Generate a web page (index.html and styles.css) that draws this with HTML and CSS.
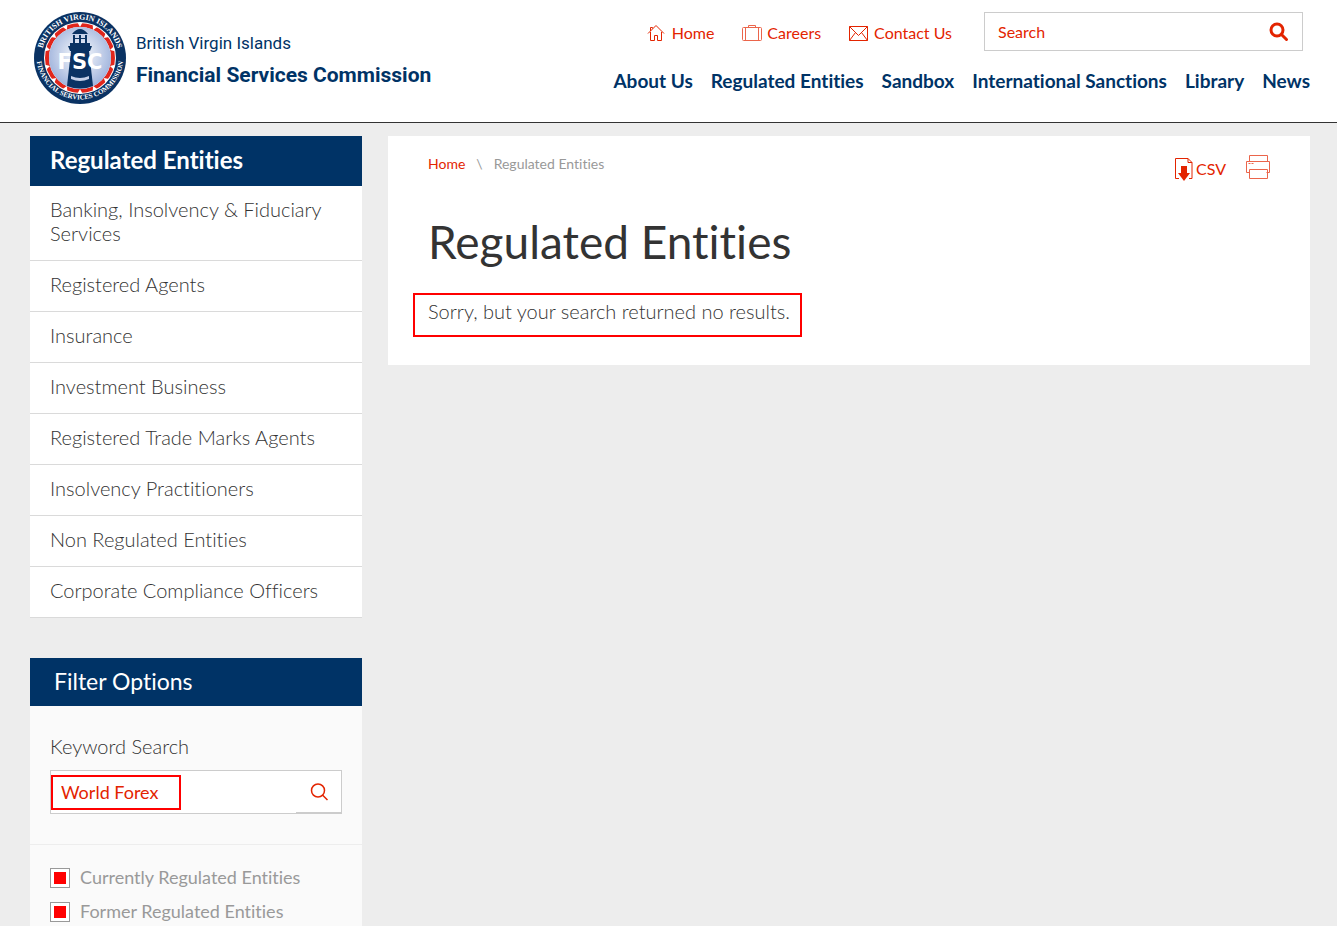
FILE: index.html
```html
<!DOCTYPE html>
<html lang="en">
<head>
    <meta charset="UTF-8">
    <meta name="viewport" content="width=device-width, initial-scale=1.0">
    <title>Regulated Entities | British Virgin Islands Financial Services Commission</title>
    <link rel="stylesheet" href="styles.css">
</head>
<body>
    <header class="header">
        <a class="logo" href="#">
            <svg class="logo-seal" viewBox="0 0 92 92" aria-hidden="true">
                <defs>
                    <radialGradient id="sky" cx="50%" cy="45%" r="55%">
                        <stop offset="0" stop-color="#ffffff"/>
                        <stop offset="1" stop-color="#9fb3dc"/>
                    </radialGradient>
                    <path id="arcTop" d="M7.500 46A38.500 38.500 0 0 1 84.500 46"/>
                    <path id="arcBottom" d="M2.500 44A43.500 43.500 0 0 0 89.500 44"/>
                </defs>
                <circle cx="46" cy="46" r="46" fill="#0a3263"/>
                <circle cx="46" cy="46" r="36" fill="#fff"/>
                <circle cx="46" cy="46" r="33" fill="none" stroke="#e1261c" stroke-width="4"/>
                <circle cx="46" cy="46" r="31" fill="url(#sky)"/>
                <g fill="#fff">
                    <path id="notch" d="M43.500 10.500h5L46 15z"/>
                    <use href="#notch" transform="rotate(25 46 46)"/>
                    <use href="#notch" transform="rotate(50 46 46)"/>
                    <use href="#notch" transform="rotate(75 46 46)"/>
                    <use href="#notch" transform="rotate(105 46 46)"/>
                    <use href="#notch" transform="rotate(130 46 46)"/>
                    <use href="#notch" transform="rotate(155 46 46)"/>
                    <use href="#notch" transform="rotate(180 46 46)"/>
                    <use href="#notch" transform="rotate(205 46 46)"/>
                    <use href="#notch" transform="rotate(230 46 46)"/>
                    <use href="#notch" transform="rotate(255 46 46)"/>
                    <use href="#notch" transform="rotate(285 46 46)"/>
                    <use href="#notch" transform="rotate(310 46 46)"/>
                    <use href="#notch" transform="rotate(335 46 46)"/>
                </g>
                <!-- lighthouse -->
                <g fill="#0a3263">
                    <path d="M38 22q8-10 16 0zM39 23h2v8h-2zM51 23h2v8h-2zM45 23h2v8h-2z"/>
                    <path d="M39 26h14v1H39zM36 31h20v4H36zM34 34h24l-2 5H36z"/>
                    <path d="M37 39h18l4 35q-13 5-26 0z"/>
                </g>
                <path d="M37 64q9 4 18 0v3q-9 4-18 0z" fill="#c5d0e8"/>
                <text class="seal-name" x="46" y="57" text-anchor="middle">FSC</text>
                <text class="seal-ring"><textPath href="#arcTop" startOffset="50%" text-anchor="middle">BRITISH VIRGIN ISLANDS</textPath></text>
                <text class="seal-ring seal-ring-bottom"><textPath href="#arcBottom" startOffset="50%" text-anchor="middle">FINANCIAL SERVICES COMMISSION</textPath></text>
            </svg>
            <span class="logo-text">
                <span class="logo-place">British Virgin Islands</span>
                <span class="logo-name">Financial Services Commission</span>
            </span>
        </a>

        <div class="header-right">
            <div class="top-row">
                <nav class="top-links" aria-label="Quick links">
                    <a href="#">
                        <svg class="icon" width="20" height="18" viewBox="0 0 20 18"><path d="M1 9.500 9 1.500l8 8M3.500 8v8.500h4v-5h3v5h4V8M3.500 7V3.500h2v1"/></svg>
                        Home
                    </a>
                    <a href="#">
                        <svg class="icon icon-light" width="20" height="18" viewBox="0 0 20 18"><rect x=".5" y="3.500" width="19" height="13" rx="1"/><path d="M3.500 3.500v13M16.500 3.500v13M6.500 3.500v-2h7v2"/></svg>
                        Careers
                    </a>
                    <a href="#">
                        <svg class="icon" width="20" height="18" viewBox="0 0 20 18"><path d="M.5 2.500h18v14H.5zM.5 2.500l9 9 9-9M.5 16.500l6-8M18.500 16.500l-6-8"/></svg>
                        Contact Us
                    </a>
                </nav>
                <form class="site-search">
                    <input type="text" placeholder="Search" aria-label="Search">
                    <button type="submit" aria-label="Search">
                        <svg class="icon icon-bold" width="20" height="20" viewBox="0 0 20 20"><circle cx="8" cy="8" r="6"/><path d="m12.500 12.500 5 5"/></svg>
                    </button>
                </form>
            </div>
            <nav class="main-menu" aria-label="Main menu">
                <a href="#">About Us</a>
                <a href="#">Regulated Entities</a>
                <a href="#">Sandbox</a>
                <a href="#">International Sanctions</a>
                <a href="#">Library</a>
                <a href="#">News</a>
            </nav>
        </div>
    </header>

    <div class="page">
        <aside class="sidebar">
            <nav class="side-menu">
                <h2>Regulated Entities</h2>
                <ul>
                    <li><a href="#">Banking, Insolvency &amp; Fiduciary Services</a></li>
                    <li><a href="#">Registered Agents</a></li>
                    <li><a href="#">Insurance</a></li>
                    <li><a href="#">Investment Business</a></li>
                    <li><a href="#">Registered Trade Marks Agents</a></li>
                    <li><a href="#">Insolvency Practitioners</a></li>
                    <li><a href="#">Non Regulated Entities</a></li>
                    <li><a href="#">Corporate Compliance Officers</a></li>
                </ul>
            </nav>

            <form class="filter">
                <h2>Filter Options</h2>
                <div class="filter-keyword">
                    <label for="keyword">Keyword Search</label>
                    <div class="keyword-box">
                        <input type="text" id="keyword" value="World Forex">
                        <button type="submit" aria-label="Search">
                            <svg class="icon icon-medium" width="20" height="20" viewBox="0 0 20 20"><circle cx="9" cy="8.500" r="6.500"/><path d="m13.500 13 5 5"/></svg>
                        </button>
                        <span class="keyword-mark"></span>
                    </div>
                </div>
                <div class="filter-status">
                    <label><input type="checkbox" checked> Currently Regulated Entities</label>
                    <label><input type="checkbox" checked> Former Regulated Entities</label>
                </div>
            </form>
        </aside>

        <main class="content">
            <div class="content-top">
                <nav class="breadcrumb" aria-label="Breadcrumb">
                    <a href="#">Home</a>
                    <span>\</span>
                    <span>Regulated Entities</span>
                </nav>
                <div class="tools">
                    <a href="#">
                        <svg class="icon" width="20" height="24" viewBox="0 0 20 24"><path d="M5 21.500H1.500v-20H14l4 4v16h-3M14 1.500v4h4"/><path class="solid" d="M7 9h6v7h3l-6 8-6-8h3z"/></svg>
                        CSV
                    </a>
                    <button type="button" aria-label="Print">
                        <svg class="icon icon-light" width="24" height="24" viewBox="0 0 24 24"><path d="M3.500 6.500v-6h18v6M3.500 17.500h-3v-11h23v11h-3M3.500 14.500h18v9h-18zM2.500 8.500h2M5.500 8.500h2"/></svg>
                    </button>
                </div>
            </div>
            <h1>Regulated Entities</h1>
            <p class="no-results">Sorry, but your search returned no results.</p>
        </main>
    </div>
</body>
</html>
```
FILE: styles.css
```css
* {
    box-sizing: border-box;
}
body {
    margin: 0;
    background-color: #ededed;
    color: #333;
    font-family: Lato, 'Open Sans', sans-serif;
    font-size: 20px;
    font-weight: 300;
    font-variant-ligatures: none;
    line-height: 24px;
}
a {
    color: inherit;
    text-decoration: none;
}
h1, h2, p, ul {
    margin: 0;
    padding: 0;
}
input, button {
    font-family: inherit;
    border: 0;
    background: none;
}
button {
    display: flex;
    align-items: center;
    justify-content: center;
    padding: 0;
    cursor: pointer;
}
.icon {
    fill: none;
    stroke: #e32400;
    stroke-width: 1;
    flex-shrink: 0;
}
.icon-light {
    opacity: 0.7;
}
.icon-medium {
    stroke-width: 1.5;
}
.icon-bold {
    stroke-width: 3;
    stroke-linecap: round;
}
.icon .solid {
    fill: #e32400;
    stroke: none;
}

/* Header */
.header {
    display: flex;
    justify-content: space-between;
    align-items: flex-start;
    padding: 12px 27px 18px 34px;
    background-color: #fff;
    border-bottom: 1px solid #333;
}
.logo {
    display: flex;
    align-items: center;
    gap: 10px;
    color: #003366;
}
.logo-seal {
    width: 92px;
    height: 92px;
}
.seal-name {
    fill: #fff;
    font: bold 21px 'DejaVu Sans', sans-serif;
}
.seal-ring {
    fill: #fff;
    font: bold 8px 'Liberation Serif', serif;
}
.seal-ring-bottom {
    font-size: 7px;
}
.logo-text {
    display: flex;
    flex-direction: column;
    gap: 4px;
    padding-top: 2px;
    font-family: Roboto, 'Open Sans', sans-serif;
    line-height: 28px;
    white-space: nowrap;
}
.logo-place {
    font-size: 17px;
    font-weight: 400;
}
.logo-name {
    font-size: 21px;
    font-weight: 700;
}
.header-right {
    display: flex;
    flex-direction: column;
    align-items: flex-end;
    gap: 18px;
}
.top-row {
    display: flex;
    align-items: center;
    gap: 32px;
    padding-right: 7px;
}
.top-links {
    display: flex;
    gap: 28px;
    color: #e32400;
    font-size: 16px;
}
.top-links a {
    display: flex;
    align-items: center;
    gap: 5px;
    padding-top: 3px;
    font-weight: 400;
}
.site-search {
    display: flex;
    width: 319px;
    height: 39px;
    border: 1px solid #ccc;
}
.site-search input {
    flex: 1;
    min-width: 0;
    padding: 0 13px;
    color: #e32400;
    font-size: 16px;
}
.site-search input::placeholder {
    color: #e32400;
    opacity: 1;
}
.site-search button {
    width: 46px;
}
.main-menu {
    display: flex;
    gap: 18px;
    color: #003366;
    font-size: 19px;
    font-weight: 700;
}

/* Page columns */
.page {
    display: grid;
    grid-template-columns: 332px 1fr;
    gap: 26px;
    align-items: start;
    padding: 13px 27px 0 30px;
}
.sidebar {
    display: flex;
    flex-direction: column;
    gap: 40px;
}
.side-menu h2,
.filter h2 {
    background-color: #003366;
    color: #fff;
    font-size: 23px;
    line-height: 24px;
}
.side-menu h2 {
    padding: 12px 20px 14px;
    font-size: 24px;
    font-weight: 700;
}
.side-menu ul {
    list-style: none;
    background-color: #fff;
}
.side-menu li {
    border-bottom: 1px solid #dadada;
}
.side-menu a {
    display: block;
    padding: 11px 20px 15px;
}

/* Filter */
.filter {
    background-color: #fafafa;
}
.filter h2 {
    padding: 11px 24px 13px;
    font-weight: 400;
}
.filter-keyword {
    padding: 28px 20px 30px;
    border-bottom: 1px solid #ededed;
}
.filter-keyword label {
    display: block;
    margin-bottom: 12px;
}
.keyword-box {
    position: relative;
    display: flex;
    height: 44px;
    border: 1px solid #ccc;
    background-color: #fff;
}
.keyword-box input {
    flex: 1;
    min-width: 0;
    padding: 0 10px;
    color: #e32400;
    font-size: 18px;
}
.keyword-box button {
    width: 45px;
    border-bottom: 1px solid #ccc;
}
.keyword-mark {
    position: absolute;
    top: 4px;
    left: 0;
    width: 130px;
    height: 35px;
    border: 2px solid #f00;
    pointer-events: none;
}
.filter-status {
    display: flex;
    flex-direction: column;
    gap: 10px;
    padding: 20px;
    color: #999;
    font-size: 18px;
    font-weight: 400;
}
.filter-status label {
    display: flex;
    align-items: center;
    gap: 10px;
}
.filter-status input {
    appearance: none;
    width: 20px;
    height: 20px;
    margin: 2px 0 0;
    padding: 3px;
    border: 1px solid #999;
    background-color: #fff;
}
.filter-status input:checked {
    background: #f00 content-box;
    box-shadow: inset 0 0 0 3px #fff;
}

/* Content */
.content {
    padding: 16px 40px 28px;
    background-color: #fff;
}
.content-top {
    display: flex;
    justify-content: space-between;
    align-items: flex-start;
}
.breadcrumb {
    display: flex;
    gap: 11px;
    color: #999;
    font-size: 14px;
    font-weight: 400;
}
.breadcrumb a {
    color: #e32400;
}
.tools {
    display: flex;
    align-items: flex-start;
    gap: 20px;
    padding-top: 3px;
    color: #e32400;
    font-size: 16px;
    font-weight: 400;
}
.tools a {
    display: flex;
    align-items: center;
    gap: 2px;
    padding-top: 2px;
}
.content h1 {
    margin: 33px 0 23px;
    font-size: 46px;
    font-weight: 400;
    line-height: 56px;
}
.no-results {
    width: fit-content;
    margin-left: -15px;
    padding: 4px 10px 12px 13px;
    border: 2px solid #f00;
}
```
